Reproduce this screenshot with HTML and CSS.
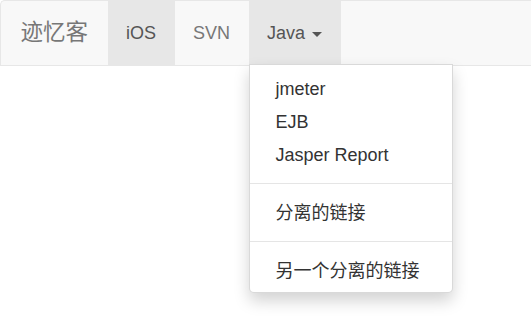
FILE: index.html
```html
<!DOCTYPE html>
<html lang="zh-CN">
<head>
    <meta charset="UTF-8">
    <title>迹忆客</title>
    <link rel="stylesheet" href="styles.css">
</head>
<body>
<nav class="topbar">
    <a class="brand" href="#">迹忆客</a>
    <ul class="links">
        <li class="item current"><a class="link" href="#">iOS</a></li>
        <li class="item"><a class="link" href="#">SVN</a></li>
        <li class="item expanded">
            <a class="link" href="#">Java <span class="arrow"></span></a>
            <div class="menu">
                <a class="menu-link" href="#">jmeter</a>
                <a class="menu-link" href="#">EJB</a>
                <a class="menu-link" href="#">Jasper Report</a>
                <div class="menu-sep"></div>
                <a class="menu-link" href="#">分离的链接</a>
                <div class="menu-sep"></div>
                <a class="menu-link" href="#">另一个分离的链接</a>
            </div>
        </li>
    </ul>
</nav>
</body>
</html>
```

FILE: styles.css
```css
* {
    box-sizing: border-box;
}

html,
body {
    min-height: 100%;
}

body {
    margin: 0;
    min-height: 100vh;
    background: #fff;
    font-family: "Liberation Sans", "Noto Sans CJK SC", sans-serif;
    font-size: 18px;
    color: #333;
}

a {
    text-decoration: none;
}

.topbar {
    display: flex;
    height: 66px;
    background: #f8f8f8;
    border: 1px solid #e7e7e7;
    border-right: none;
    border-top-left-radius: 5px;
}

.brand {
    display: block;
    padding: 0 19.5px;
    line-height: 64px;
    font-size: 22.5px;
    color: #777;
}

.links {
    display: flex;
    margin: 0;
    padding: 0;
    list-style: none;
}

.item {
    position: relative;
}

.link {
    display: block;
    padding: 0 18.5px;
    line-height: 64px;
    color: #777;
}

.current .link,
.expanded > .link {
    background: #e7e7e7;
    color: #555;
}

.arrow {
    display: inline-block;
    width: 0;
    height: 0;
    margin-left: 2px;
    vertical-align: middle;
    border-top: 5px solid;
    border-left: 5px solid transparent;
    border-right: 5px solid transparent;
}

.menu {
    position: absolute;
    top: 63px;
    left: 0;
    z-index: 10;
    width: 204px;
    padding: 7px 0 5px;
    background: #fff;
    border: 1px solid rgba(0, 0, 0, 0.15);
    border-radius: 0 0 5px 5px;
    box-shadow: 0 8px 16px rgba(0, 0, 0, 0.175);
}

.menu-link {
    display: block;
    padding: 5px 26px 3px;
    line-height: 25px;
    color: #333;
    white-space: nowrap;
}

.menu-sep {
    height: 1px;
    margin: 12px 0;
    background: #e5e5e5;
}
```
